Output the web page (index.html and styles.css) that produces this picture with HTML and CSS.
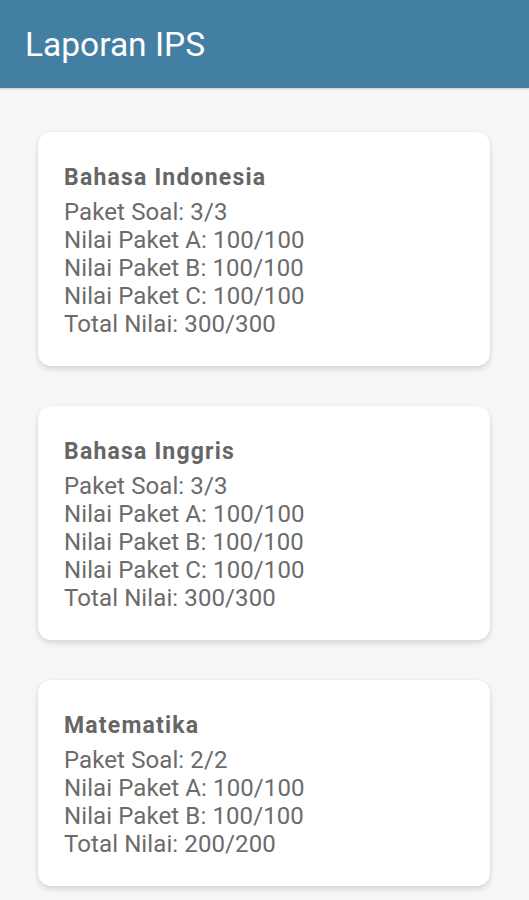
FILE: index.html
```html
<!DOCTYPE html>
<html lang="id">
<head>
    <meta charset="UTF-8">
    <meta name="viewport" content="width=device-width, initial-scale=1.0">
    <title>Laporan IPS</title>
    <link rel="stylesheet" href="styles.css">
</head>
<body>
    <div class="toolbar">
        <h1>Laporan IPS</h1>
    </div>
    <div class="content">
        <div class="card">
            <h3>Bahasa Indonesia</h3>
            <p>Paket Soal: 3/3</p>
            <p>Nilai Paket A: 100/100</p>
            <p>Nilai Paket B: 100/100</p>
            <p>Nilai Paket C: 100/100</p>
            <p>Total Nilai: 300/300</p>
        </div>
        <div class="card">
            <h3>Bahasa Inggris</h3>
            <p>Paket Soal: 3/3</p>
            <p>Nilai Paket A: 100/100</p>
            <p>Nilai Paket B: 100/100</p>
            <p>Nilai Paket C: 100/100</p>
            <p>Total Nilai: 300/300</p>
        </div>
        <div class="card">
            <h3>Matematika</h3>
            <p>Paket Soal: 2/2</p>
            <p>Nilai Paket A: 100/100</p>
            <p>Nilai Paket B: 100/100</p>
            <p>Total Nilai: 200/200</p>
        </div>
    </div>
</body>
</html>
```

FILE: styles.css
```css
body {
    font-family: Roboto, "Noto Sans", sans-serif;
    margin: 0;
    padding: 0;
    background-color: #f7f7f7;
    height: 900px;
    overflow: hidden;
}

.toolbar {
    height: 88px;
    background-color: #437fa3;
    display: flex;
    align-items: center;
    padding: 0 25px;
    box-sizing: border-box;
    box-shadow: 0 1px 2px rgba(0, 0, 0, 0.2);
}

.toolbar h1 {
    margin: 0;
    color: #fff;
    font-size: 33.5px;
    font-weight: normal;
}

.content {
    display: flex;
    flex-direction: column;
    gap: 40px;
    padding: 44px 39px 0 38px;
}

.card {
    background-color: #fff;
    border-radius: 13px;
    padding: 32px 26px 28px;
    box-shadow: 0 3px 6px rgba(0, 0, 0, 0.14), 0 0 2px rgba(0, 0, 0, 0.06);
}

.card h3 {
    margin: 0 0 6px;
    font-size: 23px;
    line-height: 28px;
    letter-spacing: 1.2px;
    font-weight: bold;
    color: #666;
}

.card p {
    margin: 0;
    font-size: 24px;
    line-height: 28px;
    letter-spacing: 0.1px;
    color: #6b6b6b;
}
```
